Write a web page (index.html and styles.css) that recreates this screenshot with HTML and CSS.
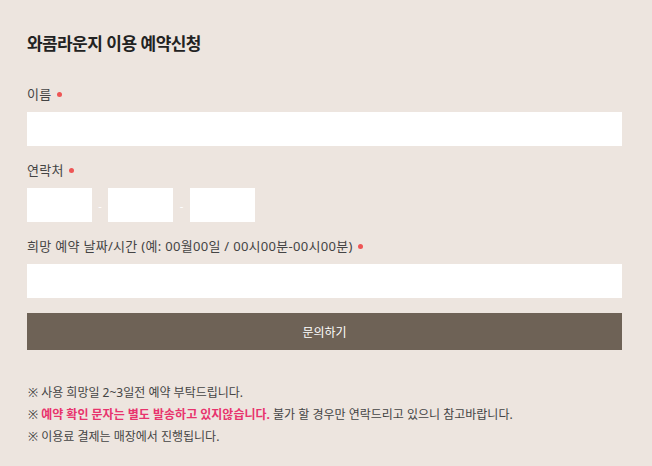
FILE: index.html
```html
<!DOCTYPE html>
<html lang="ko">
<head>
<meta charset="utf-8">
<link rel="stylesheet" href="styles.css">
</head>
<body>
<div class="wrap">
  <h1 class="title">와콤라운지 이용 예약신청</h1>
  <form class="form">
    <div class="field">
      <label class="label">이름 <span class="req"></span></label>
      <input class="input" type="text">
    </div>
    <div class="field">
      <label class="label">연락처 <span class="req"></span></label>
      <div class="phone">
        <input class="input small" type="text">
        <span class="dash">-</span>
        <input class="input small" type="text">
        <span class="dash">-</span>
        <input class="input small" type="text">
      </div>
    </div>
    <div class="field">
      <label class="label">희망 예약 날짜/시간 (예: 00월00일 / 00시00분-00시00분) <span class="req"></span></label>
      <input class="input" type="text">
    </div>
    <button class="btn" type="button">문의하기</button>
  </form>
  <ul class="notes">
    <li>※ 사용 희망일 2~3일전 예약 부탁드립니다.</li>
    <li>※ <strong class="hl">예약 확인 문자는 별도 발송하고 있지않습니다.</strong> 불가 할 경우만 연락드리고 있으니 참고바랍니다.</li>
    <li>※ 이용료 결제는 매장에서 진행됩니다.</li>
  </ul>
</div>
</body>
</html>
```
FILE: styles.css
```css
html, body {
  margin: 0;
  padding: 0;
  background: #ede5df;
}
body {
  font-family: "Noto Sans", "Noto Sans CJK KR", sans-serif;
  color: #444;
}
.wrap {
  padding: 30px 30px 0 27px;
}
.title {
  margin: 0;
  font-family: "Noto Sans CJK KR", sans-serif;
  font-size: 17px;
  font-weight: 700;
  letter-spacing: -0.6px;
  color: #222;
  line-height: 26px;
}
.form {
  margin-top: 29px;
  display: flex;
  flex-direction: column;
}
.field {
  display: flex;
  flex-direction: column;
  margin-bottom: 15px;
}
.label {
  font-size: 13px;
  letter-spacing: 0.3px;
  line-height: 18px;
  margin-bottom: 9px;
  display: flex;
  align-items: center;
  gap: 5px;
}
.req {
  width: 5px;
  height: 5px;
  border-radius: 50%;
  background: #ee5555;
  display: inline-block;
}
.input {
  border: 0;
  background: #fff;
  height: 34px;
  padding: 0;
  margin: 0;
  outline: none;
  width: 100%;
  box-sizing: border-box;
}
.phone {
  display: flex;
  align-items: center;
}
.input.small {
  width: 65px;
}
.dash {
  width: 16px;
  text-align: center;
  font-size: 11px;
  color: #fff;
}
.dash:nth-of-type(2) {
  width: 17px;
}
.btn {
  height: 37px;
  border: 0;
  background: #6e6256;
  color: #fff;
  font-family: inherit;
  font-size: 12px;
  cursor: pointer;
}
.notes {
  list-style: none;
  margin: 32px 0 0;
  padding: 0 0 0 1px;
  font-size: 12px;
  letter-spacing: 0;
  line-height: 22px;
  color: #444;
}
.hl {
  color: #e8336d;
  font-weight: 700;
}
```
